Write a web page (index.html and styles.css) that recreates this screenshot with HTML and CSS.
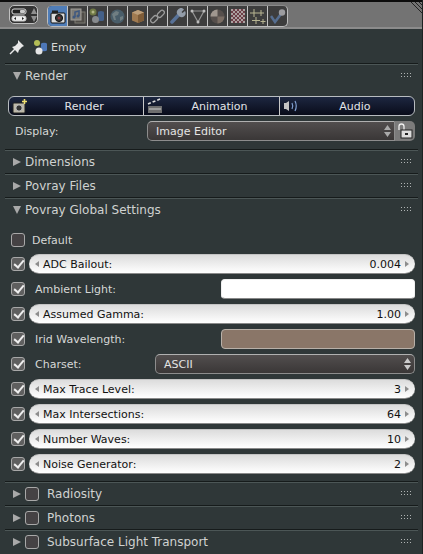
FILE: index.html
```html
<!DOCTYPE html>
<html lang="en">
<head>
    <meta charset="UTF-8">
    <meta name="viewport" content="width=device-width, initial-scale=1.0">
    <title>Properties</title>
    <link rel="stylesheet" href="styles.css">
</head>
<body>

    <header class="topbar">
        <div class="switcher">
            <svg width="18" height="14" viewBox="0 0 18 14">
                <rect x="1" y="1" width="14" height="5" rx="2" fill="#222" stroke="#ddd"/>
                <rect x="9" y="2" width="5" height="3" rx="1" fill="#ccc"/>
                <rect x="1" y="8" width="14" height="5" rx="2" fill="#eee" stroke="#ccc"/>
                <path d="M3 10.500l2-1.500v3zM13 10.500l-2-1.500v3z" fill="#222"/>
            </svg>
            <svg width="6" height="14" viewBox="0 0 6 14"><path d="M3 0l3 6H0zM3 14l3-6H0z" fill="#8f8f8f"/></svg>
        </div>
        <nav class="tabs">
            <span class="tab active">
                <svg width="16" height="15" viewBox="0 0 16 15">
                    <rect x="1" y="4" width="14" height="10" rx="1" fill="#dcdcdc" stroke="#111"/>
                    <rect x="2" y="1.500" width="6" height="3" fill="#222"/>
                    <circle cx="9" cy="9" r="3.600" fill="#333" stroke="#111"/>
                    <circle cx="9" cy="9" r="1.500" fill="#8a3a3a"/>
                </svg>
            </span>
            <span class="tab">
                <svg width="16" height="16" viewBox="0 0 16 16">
                    <rect x="5" y="4" width="10" height="11" fill="#55524c" stroke="#8d8a80"/>
                    <rect x="1" y="1" width="10" height="11" fill="#8f8c86" stroke="#b8b6ae"/>
                    <path d="M5 9V4l4-1v5" fill="none" stroke="#3f5f92" stroke-width="1.500"/>
                    <circle cx="4" cy="9" r="1.500" fill="#3f5f92"/>
                    <circle cx="8" cy="8" r="1.500" fill="#3f5f92"/>
                </svg>
            </span>
            <span class="tab">
                <svg width="17" height="16" viewBox="0 0 17 16">
                    <circle cx="4" cy="4" r="3.500" fill="#7c8848"/>
                    <circle cx="4" cy="4" r="1.500" fill="#d2d69a"/>
                    <path d="M9 4.500a3 1.500 0 0 1 6 0v7a3 1.500 0 0 1-6 0z" fill="#46699c"/>
                    <circle cx="6.500" cy="11.500" r="3.500" fill="#9a9ea2"/>
                </svg>
            </span>
            <span class="tab">
                <svg width="15" height="15" viewBox="0 0 15 15">
                    <circle cx="7.500" cy="7.500" r="7" fill="#4d6675"/>
                    <path d="M2 5l4-3 3 1-1 3-3 1 1 4-2 0zM10 8l3-1 0 3-3 2z" fill="#7e8f94"/>
                </svg>
            </span>
            <span class="tab">
                <svg width="14" height="15" viewBox="0 0 14 15">
                    <path d="M7 1l6 2.500v8L7 14l-6-2.500v-8z" fill="#b98a55"/>
                    <path d="M1 3.500L7 6l6-2.500L7 1z" fill="#dcb78a"/>
                    <path d="M7 6v8l6-2.500v-8z" fill="#8f6438"/>
                </svg>
            </span>
            <span class="tab">
                <svg width="15" height="15" viewBox="0 0 15 15" fill="none" stroke="#b4b4b4" stroke-width="1.300">
                    <rect x="0" y="8" width="8" height="4.500" rx="2.200" transform="rotate(-45 4 10)"/>
                    <rect x="7" y="2.500" width="8" height="4.500" rx="2.200" transform="rotate(-45 11 5)"/>
                </svg>
            </span>
            <span class="tab">
                <svg width="16" height="16" viewBox="0 0 16 16">
                    <path d="M2 14L9 6.500" stroke="#5f7fae" stroke-width="3.500" stroke-linecap="round"/>
                    <path d="M8 7a4 4 0 0 1 6-5.500L11.500 4l1 1L15 3a4 4 0 0 1-5.500 5.500z" fill="#a9b4c4"/>
                </svg>
            </span>
            <span class="tab">
                <svg width="16" height="15" viewBox="0 0 16 15">
                    <path d="M2 2h12L8 13z" fill="none" stroke="#aaa" stroke-width="1.200"/>
                    <circle cx="2" cy="2" r="1.500" fill="#ddd"/>
                    <circle cx="14" cy="2" r="1.500" fill="#ddd"/>
                    <circle cx="8" cy="13" r="1.500" fill="#ddd"/>
                </svg>
            </span>
            <span class="tab">
                <svg width="15" height="15" viewBox="0 0 15 15">
                    <circle cx="7.500" cy="7.500" r="7" fill="#5d5450"/>
                    <path d="M7.500 .500a7 7 0 0 0-7 7h7z" fill="#b9aea4"/>
                    <path d="M7.500 7.500h7a7 7 0 0 1-7 7z" fill="#8a7a6e"/>
                </svg>
            </span>
            <span class="tab">
                <svg width="14" height="14" viewBox="0 0 14 14">
                    <rect width="14" height="14" fill="#c9b9b9"/>
                    <path d="M2 0h2v2H2zM6 0h2v2H6zM10 0h2v2h-2zM0 2h2v2H0zM4 2h2v2H4zM8 2h2v2H8zM12 2h2v2h-2zM2 4h2v2H2zM6 4h2v2H6zM10 4h2v2h-2zM0 6h2v2H0zM4 6h2v2H4zM8 6h2v2H8zM12 6h2v2h-2zM2 8h2v2H2zM6 8h2v2H6zM10 8h2v2h-2zM0 10h2v2H0zM4 10h2v2H4zM8 10h2v2H8zM12 10h2v2h-2zM2 12h2v2H2zM6 12h2v2H6zM10 12h2v2h-2z" fill="#7a3f4a"/>
                </svg>
            </span>
            <span class="tab">
                <svg width="17" height="17" viewBox="0 0 17 17" fill="none" stroke="#d8d4a8">
                    <path d="M5 1v8M1 5h8M12 2v6M9 5h6M7 9v7M3 12.500h8M14 11v5M11.500 13.500h5"/>
                </svg>
            </span>
            <span class="tab">
                <svg width="16" height="15" viewBox="0 0 16 15">
                    <path d="M1 7l4 6 6-8" fill="none" stroke="#5d7ba6" stroke-width="2.500"/>
                    <circle cx="12" cy="3.500" r="3.200" fill="#b4b4b8"/>
                </svg>
            </span>
        </nav>
        <svg class="corner" width="11" height="11" viewBox="0 0 11 11" stroke="#222">
            <path d="M0 0l11 11M4 0l7 7M8 0l3 3"/>
        </svg>
    </header>

    <main class="props">
        <div class="context">
            <svg width="16" height="16" viewBox="0 0 16 16">
                <path d="M9 1l6 6-2 1-3 3-1 3-6-6 3-1 3-3z" fill="#e8e8e8"/>
                <path d="M6 10l-5 5" stroke="#e8e8e8" stroke-width="1.500"/>
            </svg>
            <svg class="context-icon" width="14" height="15" viewBox="0 0 14 15">
                <circle cx="3" cy="3" r="3" fill="#b3bd55"/>
                <path d="M7 4a3 1.200 0 0 1 6 0v6a3 1.200 0 0 1-6 0z" fill="#4d77b8"/>
                <circle cx="5" cy="11" r="3.500" fill="#e6e6e6"/>
            </svg>
            <span>Empty</span>
        </div>

        <section class="panel">
            <div class="panel-head">
                <span class="arrow open"></span>
                <span class="panel-title">Render</span>
                <span class="grip"></span>
            </div>
            <div class="panel-body render-body">
                <div class="btn-group">
                    <button class="op">
                        <svg width="16" height="16" viewBox="0 0 16 16">
                            <rect x="1" y="5" width="12" height="10" rx="1" fill="#bdb8a8" stroke="#222"/>
                            <circle cx="7" cy="10" r="3.200" fill="#333" stroke="#ccc"/>
                            <path d="M12.500 1v5M10 3.500h5" stroke="#f0e070" stroke-width="1.600"/>
                        </svg>
                        <span>Render</span>
                    </button>
                    <button class="op">
                        <svg width="16" height="16" viewBox="0 0 16 16">
                            <rect x="1" y="8" width="14" height="7" fill="#6e6e6e"/>
                            <path d="M2 11h12" stroke="#ccc"/>
                            <path d="M1 6l12-5" stroke="#ddd" stroke-width="1.600" stroke-dasharray="3 2"/>
                        </svg>
                        <span>Animation</span>
                    </button>
                    <button class="op">
                        <svg width="16" height="16" viewBox="0 0 16 16" fill="none">
                            <path d="M1 5h2l3-2v10l-3-2H1z" fill="#c4c4c4"/>
                            <path d="M9 5q1.500 3 0 6M12 3q2.500 5 0 10" stroke="#7f9fd0" stroke-width="1.200"/>
                        </svg>
                        <span>Audio</span>
                    </button>
                </div>
                <div class="display-row">
                    <span class="display-label">Display:</span>
                    <div class="select display-select">
                        <span>Image Editor</span>
                        <svg class="updown" width="7" height="12" viewBox="0 0 7 12"><path d="M3.500 0L7 5H0zM3.500 12L7 7H0z" fill="#aaa"/></svg>
                    </div>
                    <div class="lock">
                        <svg width="16" height="16" viewBox="0 0 16 16">
                            <path d="M2 7V3.500a2.500 2.500 0 0 1 5 0V7" fill="none" stroke="#eee" stroke-width="1.300"/>
                            <rect x="4" y="7" width="11" height="8" fill="#ddd" stroke="#222"/>
                            <rect x="8" y="10" width="3" height="2" fill="#222"/>
                        </svg>
                    </div>
                </div>
            </div>
        </section>

        <section class="panel">
            <div class="panel-head">
                <span class="arrow"></span>
                <span class="panel-title">Dimensions</span>
                <span class="grip"></span>
            </div>
        </section>

        <section class="panel">
            <div class="panel-head">
                <span class="arrow"></span>
                <span class="panel-title">Povray Files</span>
                <span class="grip"></span>
            </div>
        </section>

        <section class="panel">
            <div class="panel-head">
                <span class="arrow open"></span>
                <span class="panel-title">Povray Global Settings</span>
                <span class="grip"></span>
            </div>
            <div class="panel-body settings">
                <div class="row default-row">
                    <span class="check"></span>
                    <span class="default-label">Default</span>
                </div>
                <div class="row">
                    <span class="check on"></span>
                    <div class="num"><i class="dec"></i><span>ADC Bailout:</span><b>0.004</b><i class="inc"></i></div>
                </div>
                <div class="row">
                    <span class="check on"></span>
                    <span class="row-label">Ambient Light:</span>
                    <span class="swatch white"></span>
                </div>
                <div class="row">
                    <span class="check on"></span>
                    <div class="num"><i class="dec"></i><span>Assumed Gamma:</span><b>1.00</b><i class="inc"></i></div>
                </div>
                <div class="row">
                    <span class="check on"></span>
                    <span class="row-label">Irid Wavelength:</span>
                    <span class="swatch brown"></span>
                </div>
                <div class="row">
                    <span class="check on"></span>
                    <span class="row-label">Charset:</span>
                    <div class="select charset-select">
                        <span>ASCII</span>
                        <svg class="updown" width="7" height="12" viewBox="0 0 7 12"><path d="M3.500 0L7 5H0zM3.500 12L7 7H0z" fill="#ccc"/></svg>
                    </div>
                </div>
                <div class="row">
                    <span class="check on"></span>
                    <div class="num"><i class="dec"></i><span>Max Trace Level:</span><b>3</b><i class="inc"></i></div>
                </div>
                <div class="row">
                    <span class="check on"></span>
                    <div class="num"><i class="dec"></i><span>Max Intersections:</span><b>64</b><i class="inc"></i></div>
                </div>
                <div class="row">
                    <span class="check on"></span>
                    <div class="num"><i class="dec"></i><span>Number Waves:</span><b>10</b><i class="inc"></i></div>
                </div>
                <div class="row">
                    <span class="check on"></span>
                    <div class="num"><i class="dec"></i><span>Noise Generator:</span><b>2</b><i class="inc"></i></div>
                </div>
            </div>
        </section>

        <section class="panel">
            <div class="panel-head">
                <span class="arrow"></span>
                <span class="check head-check"></span>
                <span class="panel-title">Radiosity</span>
                <span class="grip"></span>
            </div>
        </section>

        <section class="panel">
            <div class="panel-head">
                <span class="arrow"></span>
                <span class="check head-check"></span>
                <span class="panel-title">Photons</span>
                <span class="grip"></span>
            </div>
        </section>

        <section class="panel">
            <div class="panel-head">
                <span class="arrow"></span>
                <span class="check head-check"></span>
                <span class="panel-title">Subsurface Light Transport</span>
                <span class="grip"></span>
            </div>
        </section>
    </main>

</body>
</html>
```

FILE: styles.css
```css
html, body {
    height: 100%;
}

body {
    margin: 0;
    overflow: hidden;
    background-color: #2f3738;
    color: #d6d8d6;
    font-family: "DejaVu Sans", sans-serif;
    font-size: 11px;
    border-right: 1px solid #1d2222;
    box-sizing: border-box;
}

/* top bar */

.topbar {
    position: relative;
    display: flex;
    align-items: flex-start;
    height: 29px;
    padding-top: 3px;
    padding-left: 9px;
    box-sizing: border-box;
    background-color: #737373;
    border-top: 2px solid #0c0c0c;
    border-bottom: 2px solid #8c8c8c;
}

.switcher {
    display: flex;
    align-items: center;
    justify-content: center;
    gap: 2px;
    width: 29px;
    height: 19px;
    box-sizing: border-box;
    background-color: #333;
    border: 1px solid #c0c0c0;
    border-radius: 5px;
}

.tabs {
    display: flex;
    height: 20px;
    margin-left: 9px;
    background-color: #3e3e3e;
    border: 1px solid #bdbdbd;
    border-top-color: #8a8a8a;
    border-radius: 5px;
    overflow: hidden;
}

.tab {
    display: flex;
    align-items: center;
    justify-content: center;
    width: 19px;
    height: 100%;
    border-left: 1px solid #c4c4c4;
}

.tab svg {
    opacity: 0.8;
}

.tab:first-child {
    border-left: none;
}

.tab.active {
    background-color: #4f7db8;
}

.tab.active svg {
    opacity: 1;
}

.corner {
    position: absolute;
    top: 0;
    right: 0;
}

/* panels */

.context {
    display: flex;
    align-items: center;
    height: 34px;
    padding-left: 9px;
    padding-top: 2px;
    box-sizing: border-box;
}

.context-icon {
    margin-left: 9px;
    margin-right: 3px;
}

.panel {
    margin: 0 4px 0 5px;
    border-top: 1px solid #161b1b;
    box-shadow: inset 0 1px 0 #4c5656;
}

.panel-head {
    display: flex;
    align-items: center;
    height: 23px;
    padding-left: 8px;
    padding-right: 6px;
    font-size: 12px;
}

.panel-title {
    margin-left: 4px;
    color: #cfd2d0;
}

.arrow {
    width: 0;
    height: 0;
    border-style: solid;
    border-width: 4px 0 4px 8px;
    border-color: transparent transparent transparent #a9a9a9;
}

.arrow.open {
    border-width: 8px 4px 0 4px;
    border-color: #a9a9a9 transparent transparent transparent;
}

.head-check {
    margin-left: 4px;
    margin-right: 1px;
}

.grip {
    width: 11px;
    height: 5px;
    margin-left: auto;
    background-image: radial-gradient(circle at 0.500px 0.500px, #b0b4b4 0.700px, transparent 0.800px);
    background-size: 3px 3px;
}

.panel-body {
    padding: 0 3px;
}

.render-body {
    padding-top: 9px;
    padding-bottom: 8px;
}

/* render buttons */

.btn-group {
    display: flex;
    height: 20px;
    background-image: linear-gradient(#1d2740, #090c1a);
    border: 1px solid #b8bcc0;
    border-radius: 6px;
    box-sizing: border-box;
    overflow: hidden;
}

.op {
    display: flex;
    flex: 1 1 0;
    align-items: center;
    padding: 0 0 0 3px;
    background: none;
    border: none;
    border-left: 1px solid #c8c8c8;
    color: #e2e4e8;
    font-family: inherit;
    font-size: 11px;
}

.op:first-child {
    border-left: none;
}

.op span {
    flex: 1;
    padding-right: 3px;
    text-align: center;
}

.display-row {
    display: flex;
    align-items: center;
    height: 20px;
    margin-top: 5px;
}

.display-label {
    width: 139px;
    padding-left: 7px;
    box-sizing: border-box;
}

.select {
    display: flex;
    align-items: center;
    justify-content: space-between;
    height: 20px;
    padding: 0 3px 0 8px;
    box-sizing: border-box;
    background-image: linear-gradient(#524e4e, #3a3737);
    border: 1px solid #8d8d8d;
    border-top-color: #b0b0b0;
    color: #e4e4e4;
}

.display-select {
    flex: 1;
    border-radius: 5px 0 0 5px;
}

.lock {
    display: flex;
    align-items: center;
    justify-content: center;
    width: 20px;
    height: 20px;
    background-color: #7b7b7b;
    border-radius: 0 5px 5px 0;
}

/* global settings rows */

.settings {
    display: flex;
    flex-direction: column;
    gap: 5px;
    padding-top: 9px;
    padding-bottom: 7px;
}

.row {
    display: flex;
    align-items: center;
    height: 20px;
    padding-left: 3px;
}

.default-row {
    margin-bottom: -1px;
}

.check {
    position: relative;
    flex: none;
    width: 14px;
    height: 14px;
    margin-right: 4px;
    box-sizing: border-box;
    background-color: #454244;
    border: 1px solid #a8a8a8;
    border-radius: 3px;
}

.check.on {
    background-color: #5f5f5f;
}

/* tick */
.check.on::after {
    content: "";
    position: absolute;
    left: 4px;
    top: 0;
    width: 4px;
    height: 8px;
    border: solid #eee;
    border-width: 0 2px 2px 0;
    transform: rotate(40deg);
}

.default-label {
    margin-left: 3px;
}

.row-label {
    margin-left: 6px;
}

.num {
    display: flex;
    flex: 1;
    align-items: center;
    height: 20px;
    padding: 0 6px;
    box-sizing: border-box;
    background-image: linear-gradient(#dcdcdc, #ffffff);
    border-bottom: 1px solid #8a8a8a;
    border-top: 1px solid #c4c4c4;
    border-radius: 10px;
    color: #111;
}

.num span {
    margin-left: 4px;
}

.num b {
    margin-left: auto;
    font-weight: normal;
}

.dec, .inc {
    width: 0;
    height: 0;
    border-style: solid;
    border-color: transparent;
}

.dec {
    border-width: 3px 4px 3px 0;
    border-right-color: #8d8d8d;
}

.inc {
    margin-left: 4px;
    border-width: 3px 0 3px 4px;
    border-left-color: #8d8d8d;
}

.swatch {
    width: 194px;
    height: 20px;
    margin-left: auto;
    box-sizing: border-box;
    border: 1px solid #aaa;
    border-radius: 4px;
}

.swatch.white {
    background-color: #ffffff;
    border-color: #f0f0f0 #f0f0f0 #888;
}

.swatch.brown {
    background-color: #8a7668;
    border-color: #b8b0a8;
}

.charset-select {
    width: 260px;
    margin-left: auto;
    border-radius: 5px;
}
```
